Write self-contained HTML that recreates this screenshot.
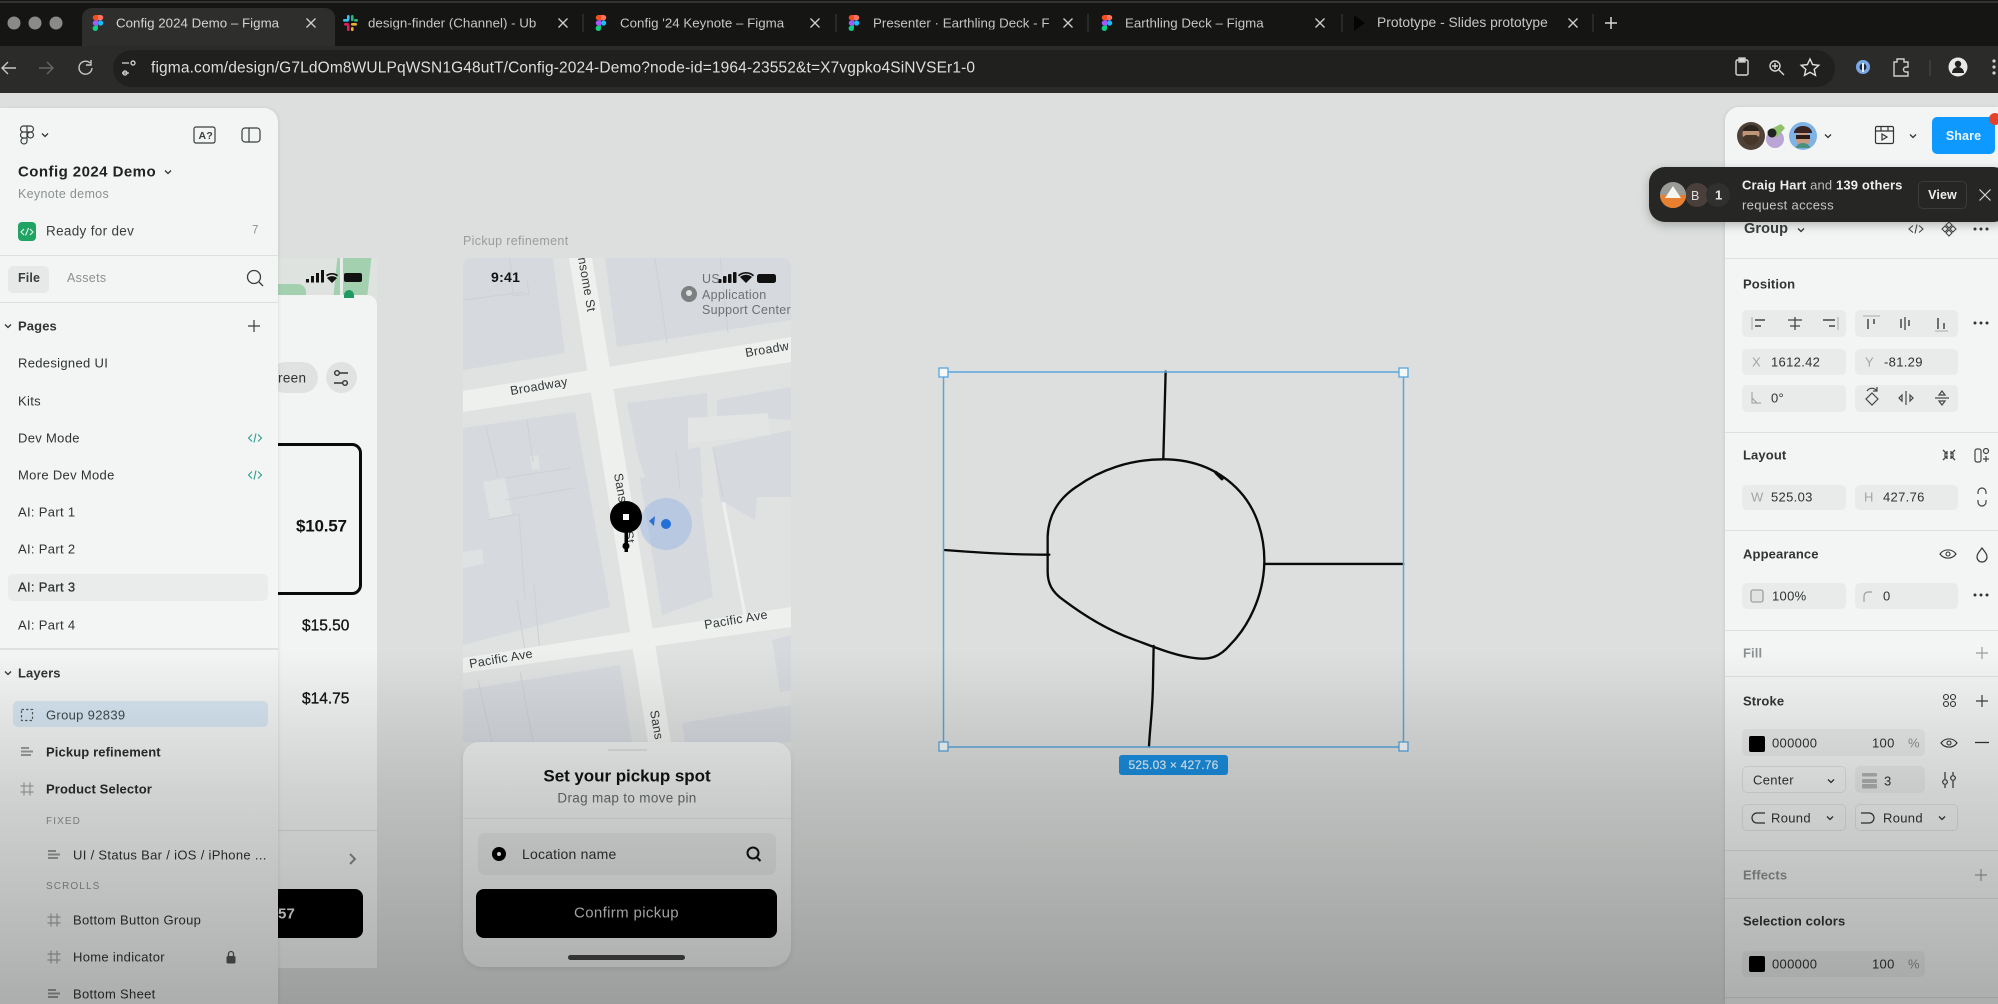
<!DOCTYPE html>
<html lang="en"><head><meta charset="utf-8"><title>Config 2024 Demo – Figma</title>
<style>
html,body{margin:0;padding:0;width:1998px;height:1004px;overflow:hidden;background:#dcdfdd}
#root{position:relative;width:1998px;height:1004px;overflow:hidden;background:#dcdfdd;filter:blur(.35px);font:13px "Liberation Sans",sans-serif;color:#2f3232;letter-spacing:.32px}
.a{position:absolute}
.t{position:absolute;white-space:nowrap;line-height:1;transform:translateY(-50%)}
.b{font-weight:700;letter-spacing:.12px}.g{color:#8d9090}
.tab{color:#c6c6c4;font-size:13.3px;letter-spacing:.02px}
.f{position:absolute;background:#e8ebea;border-radius:5px}
.s{position:absolute;border:1px solid #dfe2e1;border-radius:5px;box-sizing:border-box}
.d{position:absolute;height:1px;background:#dde0df}
.c{left:0;right:0;text-align:center}
svg{position:absolute;left:0;top:0;overflow:visible}
</style></head><body><div id="root">

<!-- browser chrome -->
<div class="a" style="left:0;top:0;width:1998px;height:92px;background:#151614"></div>
<div class="a" style="left:0;top:1px;width:1998px;height:2px;background:#333431"></div>
<div class="a" style="left:82px;top:8px;width:253px;height:38px;background:#2e2f2c;border-radius:10px 10px 0 0"></div>
<div class="a" style="left:0;top:46px;width:1998px;height:47px;background:#2b2c29"></div>
<div class="a" style="left:113px;top:50px;width:1722px;height:37px;background:#20211f;border-radius:19px"></div>
<div class="t tab" style="left:116px;top:23px;color:#d4d4d2">Config 2024 Demo – Figma</div>
<div class="t tab" style="left:368px;top:23px;width:176px;overflow:hidden">design-finder (Channel) - Ub</div>
<div class="t tab" style="left:620px;top:23px">Config '24 Keynote – Figma</div>
<div class="t tab" style="left:873px;top:23px;width:176px;overflow:hidden">Presenter · Earthling Deck - F</div>
<div class="t tab" style="left:1125px;top:23px">Earthling Deck – Figma</div>
<div class="t tab" style="left:1377px;top:23px;font-size:13.8px">Prototype - Slides prototype</div>
<div class="t" style="left:151px;top:68px;color:#dededc;font-size:15.5px;letter-spacing:.14px">figma.com/design/G7LdOm8WULPqWSN1G48utT/Config-2024-Demo?node-id=1964-23552&amp;t=X7vgpko4SiNVSEr1-0</div>

<!-- product selector frame behind left panel -->
<div class="a" style="left:270px;top:258px;width:107px;height:45px;background:#dfe3e0;overflow:hidden">
<div class="a" style="left:8px;top:26px;width:28px;height:20px;background:#a3d1b0;border-radius:0 8px 0 0"></div>
<div class="a" style="left:65px;top:0;width:34px;height:45px;background:#a3d1b0;transform:skewX(-6deg)"></div>
<div class="a" style="left:70px;top:0;width:3px;height:45px;background:#e8ecea"></div>
</div>
<div class="a" style="left:270px;top:295px;width:107px;height:673px;background:#f1f4f3;border-radius:0 10px 0 0"></div>
<div class="a" style="left:270px;top:362px;width:48px;height:31px;background:#dfe2e1;border-radius:16px"></div>
<div class="t" style="left:278px;top:378px;font-size:13.5px">reen</div>
<div class="a" style="left:326px;top:362px;width:31px;height:31px;background:#dfe2e1;border-radius:50%"></div>
<div class="a" style="left:262px;top:443px;width:100px;height:152px;box-sizing:border-box;border:3px solid #0a0a0a;border-radius:10px"></div>
<div class="t b" style="left:296px;top:526px;font-size:17px;color:#111;letter-spacing:-.2px">$10.57</div>
<div class="t" style="left:302px;top:626px;font-size:15.5px;color:#111;-webkit-text-stroke:.3px #111;letter-spacing:0">$15.50</div>
<div class="t" style="left:302px;top:699px;font-size:15.5px;color:#111;-webkit-text-stroke:.3px #111;letter-spacing:0">$14.75</div>
<div class="a" style="left:270px;top:830px;width:107px;height:1px;background:#dcdfde"></div>
<div class="a" style="left:262px;top:889px;width:101px;height:49px;background:#000;border-radius:8px"></div>
<div class="t b" style="left:278px;top:914px;color:#e6e6e6;font-size:15px">57</div>

<!-- phone: pickup refinement -->
<div class="t" style="left:463px;top:241px;color:#9a9d9c;font-size:12.5px">Pickup refinement</div>
<svg width="1998" height="1004" font-family="Liberation Sans, sans-serif" style="letter-spacing:.3px">
<clipPath id="ph"><path d="M463 266a8 8 0 0 1 8-8h312a8 8 0 0 1 8 8v490H463z"/></clipPath>
<g clip-path="url(#ph)">
<rect x="463" y="258" width="328" height="500" fill="#dfe2e1"/>
<g fill="#d6dadf">
<path d="M463 258h90l12 95-102 17z"/>
<path d="M605 258h186v62l-174 27z"/>
<path d="M463 428l112-16 35 195-147 38z"/>
<path d="M627 403l80-10 1 34-20 3v20l-50 7z"/>
<path d="M717 400l74-13v33l-31-2-2 9-41 6z"/>
<path d="M638 457l62-10 3 50-47 10z"/>
<path d="M713 447l78-17v67h-34l-2 23-35-20z"/>
<path d="M640 478l57-8 16 127-51 18z"/>
<path d="M463 690l157-25 12 77H463z"/>
<path d="M682 723l109-18v37H685z"/>
<path d="M772 640l19-5v55l-11 2z"/>
</g>
<path d="M483 482l22-4 7 37-22 3zM463 552l19-3 2 15-21 4zM530 456l8-1 2 14-8 1z" fill="#dfe2e2"/>
<g fill="none" stroke="#cdd1d5" stroke-width="1">
<path d="M510 258l3 38 16-2-2-14M463 300l62-8M486 427l12 50M527 420l6 42M505 478l65-10M505 500l70-12M487 520l32-6 6 85M478 680l14 62M520 672l13 70M540 655l-6-70M517 600l8 50"/>
<path d="M655 258l12 85M720 258l8 75M676 450l4 40M713 447l10 50M650 630l5 0"/>
</g>
<path d="M688 418l80-5 2 22-82 8z" fill="#e2e5e4"/>
<path d="M722 503l3-1 22 115-3 1z" fill="#eef0ef"/>
<g fill="#eef0ee">
<path d="M569 258h23l79 484h-23z"/>
<path d="M463 391l328-54v25l-328 50z"/>
<path d="M463 658l328-51v20L463 673z"/>
</g>
<g fill="#33383a" font-size="12.5">
<text x="0" y="0" transform="translate(511 395) rotate(-9.5)">Broadway</text>
<text x="0" y="0" transform="translate(746 357) rotate(-9.5)">Broadw</text>
<text x="0" y="0" transform="translate(578 258) rotate(80)">nsome St</text>
<text x="0" y="0" transform="translate(614 474) rotate(80)">Sansome St</text>
<text x="0" y="0" transform="translate(705 629) rotate(-9.5)">Pacific Ave</text>
<text x="0" y="0" transform="translate(470 668) rotate(-9.5)">Pacific Ave</text>
<text x="0" y="0" transform="translate(650 711) rotate(80)">Sans</text>
</g>
<circle cx="666" cy="524" r="26" fill="#6d9be6" fill-opacity=".28"/>
<circle cx="666" cy="524" r="5" fill="#2470d8"/>
<path d="M655 516l-6 5 5 5z" fill="#2f6fd0"/>
<rect x="624.5" y="525" width="3.5" height="27" fill="#000"/><circle cx="626" cy="546" r="3.5" fill="#000"/>
<circle cx="626" cy="517" r="16" fill="#000"/><rect x="623" y="514" width="6" height="6" fill="#fff"/>
<text x="491" y="282" font-size="14" font-weight="700" fill="#111">9:41</text>
<g fill="#111"><rect x="718" y="279" width="3.5" height="4" rx="1"/><rect x="723" y="276" width="3.5" height="7" rx="1"/><rect x="728" y="274" width="3.5" height="9" rx="1"/><rect x="733" y="272" width="3.5" height="11" rx="1"/><rect x="757" y="274" width="19" height="9" rx="2.5"/><path d="M746 283l-6-6a9 9 0 0 1 12 0zM738 275a12 12 0 0 1 16 0l-1 1.5a10 10 0 0 0-14 0z"/></g>
<g fill="#6c7071" font-size="12.5"><text x="702" y="283">US</text><text x="702" y="299">Application</text><text x="702" y="314">Support Center</text></g>
<circle cx="689" cy="294" r="8" fill="#7c8081"/><circle cx="689" cy="293" r="3" fill="#dfe2e1"/>
</g>
</svg>
<div class="a" style="left:463px;top:742px;width:328px;height:225px;background:#eef1f0;border-radius:16px 16px 20px 20px;box-shadow:0 2px 6px rgba(0,0,0,.08)"></div>
<div class="a" style="left:608px;top:749px;width:39px;height:2px;background:#dcdfde"></div>
<div class="t b c" style="left:463px;right:auto;width:328px;top:776px;font-size:17px;color:#111;letter-spacing:-.05px">Set your pickup spot</div>
<div class="t c" style="left:463px;right:auto;width:328px;top:798px;font-size:13.5px;color:#666a6a">Drag map to move pin</div>
<div class="a" style="left:463px;top:818px;width:328px;height:1px;background:#e0e3e2"></div>
<div class="a" style="left:478px;top:833px;width:298px;height:42px;background:#e3e6e5;border-radius:7px"></div>
<div class="a" style="left:492px;top:847px;width:14px;height:14px;background:#000;border-radius:50%"></div>
<div class="a" style="left:497px;top:852px;width:4px;height:4px;background:#fff;border-radius:50%"></div>
<div class="t" style="left:522px;top:854px;font-size:14px;letter-spacing:.2px">Location name</div>
<div class="a" style="left:476px;top:889px;width:301px;height:49px;background:#000;border-radius:8px"></div>
<div class="t c" style="left:476px;right:auto;width:301px;top:913px;font-size:15px;color:#cfcfcf;letter-spacing:.35px">Confirm pickup</div>
<div class="a" style="left:568px;top:955px;width:117px;height:5px;background:#444;border-radius:3px"></div>

<!-- vector drawing + selection -->
<svg width="1998" height="1004">
<g transform="translate(920 350) scale(.3333)" fill="none" stroke="#0a0a0a" stroke-width="7" stroke-linecap="round">
<path d="M730 328C830 328 905 365 960 425C1010 480 1035 560 1033 640C1030 740 985 830 930 885C900 920 870 930 830 925C770 920 700 890 640 868C560 840 490 795 430 750C395 725 383 700 383 665L383 560C385 500 410 450 470 410C540 360 630 328 730 328Z"/>
<path d="M737 65L730 328M72 600C150 606 280 615 388 614M1033 642L1450 642M701 888L699 1000C698 1080 690 1130 687 1190"/>
<path d="M888 368l18 18" stroke-width="10"/>
</g>
<rect x="943.5" y="372" width="460" height="375" fill="none" stroke="#5aa6dc" stroke-width="1.5"/>
<g fill="#f3f8fa" stroke="#5aa6dc" stroke-width="1.3"><rect x="939" y="368" width="9" height="9"/><rect x="1399" y="368" width="9" height="9"/><rect x="939" y="742" width="9" height="9"/><rect x="1399" y="742" width="9" height="9"/></g>
</svg>
<div class="a" style="left:1119px;top:755px;width:109px;height:20px;background:#1a8fe0;border-radius:3px"></div>
<div class="t c" style="left:1119px;right:auto;width:109px;top:765px;color:#d7eefc;font-size:12px;letter-spacing:.2px;-webkit-text-stroke:.25px #d7eefc">525.03 × 427.76</div>

<!-- left panel -->
<div class="a" style="left:0;top:108px;width:278px;height:896px;background:#f2f5f4;border-radius:0 14px 0 0;box-shadow:1px 0 3px rgba(0,0,0,.08)"></div>
<div class="t b" style="left:18px;top:172px;font-size:15px;color:#222;letter-spacing:.45px">Config 2024 Demo</div>
<div class="t g" style="left:18px;top:194px;font-size:12.5px">Keynote demos</div>
<div class="a" style="left:18px;top:222px;width:18px;height:19px;background:#1fa463;border-radius:4px"></div>
<div class="t" style="left:46px;top:231px;font-size:13.5px;color:#3a3d3d">Ready for dev</div>
<div class="t g" style="left:252px;top:231px;font-size:11.5px">7</div>
<div class="d" style="left:0;top:255px;width:278px"></div>
<div class="a" style="left:8px;top:266px;width:41px;height:27px;background:#e6e9e8;border-radius:5px"></div>
<div class="t b" style="left:18px;top:278px;font-size:12.5px;color:#3a3d3d">File</div>
<div class="t g" style="left:67px;top:278px;font-size:12.5px">Assets</div>
<div class="d" style="left:0;top:302px;width:278px"></div>
<div class="t b" style="left:18px;top:326px;color:#333">Pages</div>
<div class="t" style="left:18px;top:363px">Redesigned UI</div>
<div class="t" style="left:18px;top:401px">Kits</div>
<div class="t" style="left:18px;top:438px">Dev Mode</div>
<div class="t" style="left:18px;top:475px">More Dev Mode</div>
<div class="t" style="left:18px;top:512px">AI: Part 1</div>
<div class="t" style="left:18px;top:549px">AI: Part 2</div>
<div class="a" style="left:8px;top:574px;width:260px;height:27px;background:#e9eceb;border-radius:5px"></div>
<div class="t" style="left:18px;top:587px;-webkit-text-stroke:.25px #2f3232">AI: Part 3</div>
<div class="t" style="left:18px;top:625px">AI: Part 4</div>
<div class="a" style="left:0;top:648px;width:278px;height:2px;background:#dde0df"></div>
<div class="t b" style="left:18px;top:673px;color:#333">Layers</div>
<div class="a" style="left:13px;top:701px;width:255px;height:26px;background:#d6e6f1;border-radius:5px"></div>
<div class="t" style="left:46px;top:715px;color:#3f4a4d">Group 92839</div>
<div class="t b" style="left:46px;top:752px;color:#2a2c2c">Pickup refinement</div>
<div class="t b" style="left:46px;top:789px;color:#2a2c2c">Product Selector</div>
<div class="t g" style="left:46px;top:822px;font-size:10px;letter-spacing:1.1px">FIXED</div>
<div class="t" style="left:73px;top:855px">UI / Status Bar / iOS / iPhone ...</div>
<div class="t g" style="left:46px;top:887px;font-size:10px;letter-spacing:1.1px">SCROLLS</div>
<div class="t" style="left:73px;top:920px">Bottom Button Group</div>
<div class="t" style="left:73px;top:957px">Home indicator</div>
<div class="t" style="left:73px;top:994px">Bottom Sheet</div>

<!-- right panel -->
<div class="a" style="left:1725px;top:107px;width:273px;height:897px;background:#f2f5f4;border-radius:14px 0 0 0;box-shadow:-1px 0 3px rgba(0,0,0,.08)"></div>
<div class="a" style="left:1932px;top:117px;width:63px;height:37px;background:#0d99ff;border-radius:5px"></div>
<div class="t b c" style="left:1932px;right:auto;width:63px;top:136px;color:#eaf6ff;font-size:12.5px">Share</div>
<div class="a" style="left:1989px;top:113px;width:12px;height:12px;background:#e4432b;border-radius:50%"></div>
<div class="d" style="left:1725px;top:258px;width:273px"></div>
<div class="t b" style="left:1744px;top:229px;font-size:14.5px;color:#3a3d3d">Group</div>
<div class="t b" style="left:1743px;top:284px;color:#333">Position</div>
<div class="f" style="left:1742px;top:310px;width:104px;height:27px"></div>
<div class="f" style="left:1855px;top:310px;width:103px;height:27px"></div>
<div class="f" style="left:1742px;top:349px;width:104px;height:26px"></div>
<div class="f" style="left:1855px;top:349px;width:103px;height:26px"></div>
<div class="f" style="left:1742px;top:385px;width:104px;height:27px"></div>
<div class="f" style="left:1855px;top:385px;width:103px;height:27px"></div>
<div class="t g" style="left:1752px;top:362px;color:#a2a5a5">X</div>
<div class="t" style="left:1771px;top:362px">1612.42</div>
<div class="t g" style="left:1865px;top:362px;color:#a2a5a5">Y</div>
<div class="t" style="left:1884px;top:362px">-81.29</div>
<div class="t" style="left:1771px;top:398px">0°</div>
<div class="d" style="left:1725px;top:432px;width:273px"></div>
<div class="t b" style="left:1743px;top:455px;color:#333">Layout</div>
<div class="f" style="left:1742px;top:485px;width:104px;height:25px"></div>
<div class="f" style="left:1855px;top:485px;width:103px;height:25px"></div>
<div class="t g" style="left:1751px;top:497px;color:#a2a5a5">W</div>
<div class="t" style="left:1771px;top:497px">525.03</div>
<div class="t g" style="left:1864px;top:497px;color:#a2a5a5">H</div>
<div class="t" style="left:1883px;top:497px">427.76</div>
<div class="d" style="left:1725px;top:530px;width:273px"></div>
<div class="t b" style="left:1743px;top:554px;color:#333">Appearance</div>
<div class="f" style="left:1742px;top:583px;width:104px;height:26px"></div>
<div class="f" style="left:1855px;top:583px;width:103px;height:26px"></div>
<div class="t" style="left:1772px;top:596px">100%</div>
<div class="t" style="left:1883px;top:596px">0</div>
<div class="d" style="left:1725px;top:630px;width:273px"></div>
<div class="t b g" style="left:1743px;top:653px">Fill</div>
<div class="d" style="left:1725px;top:676px;width:273px"></div>
<div class="t b" style="left:1743px;top:701px;color:#333">Stroke</div>
<div class="f" style="left:1742px;top:729px;width:183px;height:27px"></div>
<div class="a" style="left:1749px;top:736px;width:16px;height:16px;background:#000;border-radius:2px"></div>
<div class="t" style="left:1772px;top:743px">000000</div>
<div class="t" style="left:1872px;top:743px">100</div>
<div class="t g" style="left:1908px;top:743px">%</div>
<div class="s" style="left:1742px;top:766px;width:104px;height:27px"></div>
<div class="t" style="left:1753px;top:780px">Center</div>
<div class="f" style="left:1855px;top:766px;width:70px;height:27px"></div>
<div class="t" style="left:1884px;top:781px">3</div>
<div class="s" style="left:1742px;top:804px;width:104px;height:27px"></div>
<div class="s" style="left:1855px;top:804px;width:103px;height:27px"></div>
<div class="t" style="left:1771px;top:818px">Round</div>
<div class="t" style="left:1883px;top:818px">Round</div>
<div class="d" style="left:1725px;top:850px;width:273px"></div>
<div class="t b g" style="left:1743px;top:875px">Effects</div>
<div class="d" style="left:1725px;top:898px;width:273px"></div>
<div class="t b" style="left:1743px;top:921px;color:#333">Selection colors</div>
<div class="f" style="left:1742px;top:951px;width:183px;height:26px"></div>
<div class="a" style="left:1749px;top:956px;width:16px;height:16px;background:#000;border-radius:2px"></div>
<div class="t" style="left:1772px;top:964px">000000</div>
<div class="t" style="left:1872px;top:964px">100</div>
<div class="t g" style="left:1908px;top:964px">%</div>
<div class="d" style="left:1725px;top:997px;width:273px"></div>

<!-- toast -->
<div class="a" style="left:1649px;top:167px;width:360px;height:55px;background:#262724;border-radius:16px;box-shadow:0 3px 10px rgba(0,0,0,.25)"></div>
<div class="a" style="left:1685px;top:183px;width:24px;height:24px;background:#4a3f3a;border-radius:50%"></div>
<div class="a" style="left:1706px;top:183px;width:24px;height:24px;background:#30312e;border-radius:50%"></div>
<div class="t" style="left:1691px;top:196px;color:#ddd;font-size:12.5px;letter-spacing:0">B</div>
<div class="t b" style="left:1715px;top:195px;color:#e8e8e6;font-size:13px">1</div>
<div class="t" style="left:1742px;top:185px;color:#bdbdbb;letter-spacing:.15px"><b style="color:#eee">Craig Hart</b> and <b style="color:#eee">139 others</b></div>
<div class="t" style="left:1742px;top:205px;color:#c6c6c4">request access</div>
<div class="a" style="left:1918px;top:181px;width:49px;height:28px;box-sizing:border-box;border:1px solid #3a3b38;border-radius:5px"></div>
<div class="t b c" style="left:1918px;right:auto;width:49px;top:195px;color:#eee;font-size:12.5px">View</div>

<!-- icons -->
<svg width="1998" height="1004">
<defs>
<g id="fg"><path d="M0-8h-2.6a2.6 2.6 0 0 0 0 5.3H0z" fill="#f24e1e"/><path d="M0-8h2.6a2.6 2.6 0 0 1 0 5.3H0z" fill="#ff7262"/><path d="M0-2.7h-2.6a2.6 2.6 0 0 0 0 5.3H0z" fill="#a259ff"/><circle cx="2.6" r="2.6" fill="#1abcfe"/><path d="M0 2.6h-2.6a2.7 2.7 0 1 0 2.6 2.7z" fill="#0acf83"/></g>
<path id="x" d="M-4.5-4.5l9 9M4.5-4.5l-9 9" fill="none" stroke="#d0d0ce" stroke-width="1.3"/>
<path id="ch" d="M-3-1.5L0 1.5 3-1.5" fill="none" stroke="#333" stroke-width="1.3"/>
<path id="pl" d="M-6 0H6M0-6V6" fill="none" stroke="#3a3d3d" stroke-width="1.2"/>
<path id="plg" d="M-6 0H6M0-6V6" fill="none" stroke="#9a9d9d" stroke-width="1.2"/>
<g id="dt" fill="#333"><circle cx="-6" r="1.5"/><circle r="1.5"/><circle cx="6" r="1.5"/></g>
<g id="ey" fill="none" stroke="#333" stroke-width="1.1"><path d="M-8 0C-4-5.5 4-5.5 8 0C4 5.5-4 5.5-8 0Z"/><circle r="2"/></g>
<g id="lay" fill="#9a9d9d"><rect x="-6" y="-5" width="8" height="2"/><rect x="-6" y="-1.5" width="12" height="2"/><rect x="-6" y="2" width="10" height="2"/></g>
<path id="fr" d="M-3-6.5V6.5M3-6.5V6.5M-6.5-3H6.5M-6.5 3H6.5" fill="none" stroke="#a4a7a7" stroke-width="1.2"/>
<g id="cd" fill="none" stroke="#2e9d8b" stroke-width="1.1"><path d="M-3-3.5L-6.5 0-3 3.5M3-3.5L6.5 0 3 3.5M1-4.5L-1 4.5"/></g>
</defs>

<!-- chrome -->
<g fill="#8a8a88"><circle cx="14" cy="23" r="6.5"/><circle cx="35" cy="23" r="6.5"/><circle cx="56" cy="23" r="6.5"/></g>
<use href="#fg" x="98" y="23"/><use href="#fg" x="601" y="23"/><use href="#fg" x="854" y="23"/><use href="#fg" x="1107" y="23"/>
<use href="#x" x="311" y="23"/><use href="#x" x="563" y="23"/><use href="#x" x="815" y="23"/><use href="#x" x="1068" y="23"/><use href="#x" x="1320" y="23"/><use href="#x" x="1573" y="23"/>
<path d="M583 14v18M836 14v18M1088 14v18M1342 14v18M1593 14v18" stroke="#3c3d3a"/>
<g><rect x="343" y="19" width="6" height="2.6" rx="1.3" fill="#36c5f0"/><rect x="351" y="15" width="2.6" height="6" rx="1.3" fill="#2eb67d"/><rect x="351" y="23" width="6" height="2.6" rx="1.3" fill="#ecb22e"/><rect x="347" y="25" width="2.6" height="6" rx="1.3" fill="#e01e5a"/><rect x="347" y="15" width="2.6" height="5" rx="1.3" fill="#36c5f0"/><rect x="344" y="23" width="5" height="2.6" rx="1.3" fill="#e01e5a"/><rect x="351" y="27" width="2.6" height="4" rx="1.3" fill="#ecb22e"/><rect x="354" y="19" width="4" height="2.6" rx="1.3" fill="#2eb67d"/></g>
<path d="M1354 15l11 8-11 8z" fill="#050505"/>
<path d="M1605 23h12M1611 17v12" stroke="#d8d8d6" stroke-width="1.5"/>
<g fill="none" stroke="#c8c8c6" stroke-width="1.4">
<path d="M16 68H2M8 62l-6 6 6 6"/>
<path d="M39 68h14M47 62l6 6-6 6" stroke="#666"/>
<path d="M90 63a6.5 6.5 0 1 0 2 5M91 60v5h-5"/>
<path d="M122 63h7M122 73h7" stroke="#bbb"/><circle cx="133" cy="63" r="2"/><circle cx="125" cy="73" r="2"/>
<rect x="1736" y="60" width="12" height="15" rx="1.5" stroke="#d8d8d6"/><rect x="1739" y="58" width="6" height="4" fill="#d8d8d6"/>
<circle cx="1775" cy="66" r="5" stroke="#d8d8d6"/><path d="M1779 70l5 5M1775 63v6M1772 66h6" stroke="#d8d8d6"/>
<path d="M1810 59l2.6 5.6 6.2.7-4.6 4.1 1.3 6-5.500-3.100-5.500 3.100 1.300-6-4.600-4.100 6.200-.7z" stroke="#e0e0de"/>
<path d="M1894 62h3v-3h7v3h4v5h-2a2 2 0 0 0 0 5h2v4h-14z" stroke="#cfcfcd"/>
<path d="M1930 60v16" stroke="#444"/>
</g>
<circle cx="1863" cy="67" r="7" fill="#7aa7e6"/><circle cx="1863" cy="67" r="3.5" fill="#1d2a3d"/><rect x="1862" y="63" width="2" height="9" fill="#e8eef6"/>
<circle cx="1958" cy="67" r="9.5" fill="#e8e8e6"/><circle cx="1958" cy="64" r="3.2" fill="#20211f"/><path d="M1952 73a6 6 0 0 1 12 0z" fill="#20211f"/>
<g fill="#cfcfcd"><circle cx="1994" cy="61" r="1.6"/><circle cx="1994" cy="67" r="1.6"/><circle cx="1994" cy="73" r="1.6"/></g>

<!-- product frame bits -->
<g fill="#111"><rect x="306" y="279" width="3" height="3.5"/><rect x="311" y="276" width="3" height="6.5"/><rect x="316" y="273" width="3" height="9.5"/><rect x="321" y="270" width="3" height="12.5"/><rect x="344" y="273" width="18" height="9" rx="2"/><path d="M332 283l-5-5a7.5 7.5 0 0 1 10 0zM326 275a10 10 0 0 1 12 0l-1 1.400a8 8 0 0 0-10 0z"/></g>
<path d="M349 290a5 5 0 0 1 5 5v3h-10v-3a5 5 0 0 1 5-5z" fill="#1f9a63"/>
<g fill="none" stroke="#333" stroke-width="1.4"><path d="M334 373h14M334 383h14"/><circle cx="337" cy="373" r="2.3" fill="#dfe2e1"/><circle cx="345" cy="383" r="2.3" fill="#dfe2e1"/></g>
<path d="M350 854l5 5-5 5" fill="none" stroke="#888" stroke-width="2"/>
<g fill="none" stroke="#111" stroke-width="2"><circle cx="753" cy="853" r="5.5"/><path d="M757 857.5l3.5 3.5"/></g>

<!-- left panel icons -->
<g fill="none" stroke="#3a3d3d" stroke-width="1.2">
<path d="M27 126h-3.500a3 3 0 0 0 0 6H27zM27 126h3.500a3 3 0 0 1 0 6H27zM27 132h-3.500a3 3 0 0 0 0 6H27zM27 138h-3.500a3 3 0 1 0 3.500 3z"/><circle cx="30.500" cy="135" r="3"/>
<rect x="194" y="127" width="21" height="16" rx="2"/>
<rect x="242" y="128" width="18" height="14" rx="3"/><path d="M249 128v14"/>
<circle cx="254" cy="277" r="6.500" stroke-width="1.300"/><path d="M259 282l4 4" stroke-width="1.300"/>
</g>
<text x="198.500" y="139" font-family="Liberation Sans,sans-serif" font-size="10.500" font-weight="700" fill="#3a3d3d">A?</text>
<use href="#ch" x="45" y="135"/><use href="#ch" x="168" y="172"/><use href="#ch" x="8" y="326"/><use href="#ch" x="8" y="673"/>
<g fill="none" stroke="#e8f7ee" stroke-width="1.100"><path d="M24 229l-3 3 3 3M30 229l3 3-3 3M28.500 228l-3 7.500"/></g>
<use href="#pl" x="254" y="326"/>
<use href="#cd" x="255" y="438"/><use href="#cd" x="255" y="475"/>
<rect x="21.500" y="709.500" width="11" height="11" fill="none" stroke="#565b5e" stroke-width="1.200" stroke-dasharray="2.500 2"/>
<use href="#lay" x="27" y="752"/><use href="#fr" x="27" y="789"/><use href="#lay" x="54" y="855"/><use href="#fr" x="54" y="920"/><use href="#fr" x="54" y="957"/><use href="#lay" x="54" y="994"/>
<rect x="226.500" y="956" width="9" height="7.500" rx="1.500" fill="#555"/><path d="M228.500 956v-2a2.500 2.500 0 0 1 5 0v2" fill="none" stroke="#555" stroke-width="1.300"/>

<!-- right panel top -->
<circle cx="1751" cy="136" r="14" fill="#4e4138"/><circle cx="1751" cy="134" r="8.500" fill="#c09478"/><path d="M1743 137a8 8 0 0 0 16 0l-3-2h-10z" fill="#463629"/><path d="M1743 131a8 6 0 0 1 16 0z" fill="#2c241e"/>
<circle cx="1775" cy="139" r="9" fill="#b9a6d6"/><path d="M1767 131l14-7 4 4-8 9z" fill="#8fc06a"/><circle cx="1772" cy="133" r="4.500" fill="#1f2320"/>
<circle cx="1803" cy="136" r="14" fill="#7fb3e6"/><circle cx="1803" cy="139" r="7" fill="#c89a80"/><path d="M1794 133a9 7 0 0 1 18 0z" fill="#3a2320"/><rect x="1796" y="135" width="14" height="4" fill="#2a1a18"/><path d="M1796 148a7 5 0 0 1 14 0z" fill="#4d8f7f"/>
<use href="#ch" x="1828" y="136"/>
<g fill="none" stroke="#333" stroke-width="1.200"><rect x="1875.500" y="126.500" width="18" height="17" rx="1.500"/><path d="M1875.500 131h18M1881 126v5M1888 126v5"/><path d="M1882 134l5 3-5 3z"/></g>
<use href="#ch" x="1913" y="136"/>
<circle cx="1673" cy="195" r="13" fill="#9a9a97"/><path d="M1660 195a13 13 0 0 0 26 0z" fill="#e8802f"/><path d="M1673 186l8 12h-16z" fill="#f5f5f2"/>
<path d="M1979.500 189.500l11 11M1990.500 189.500l-11 11" stroke="#d8d8d6" stroke-width="1.200" fill="none"/>
<use href="#ch" x="1801" y="230"/>
<path d="M1913 225.500l-4 3.500 4 3.500M1919 225.500l4 3.500-4 3.500M1917 224.500l-2 9" fill="none" stroke="#444" stroke-width="1.100"/>
<g fill="none" stroke="#444" stroke-width="1.100"><path d="M1949 222l3 3-3 3-3-3zM1949 230l3 3-3 3-3-3zM1945 226l3 3-3 3-3-3zM1953 226l3 3-3 3-3-3z"/></g>
<use href="#dt" x="1981" y="229"/>

<!-- align icons -->
<g fill="none" stroke="#444" stroke-width="1.500">
<path d="M1752 317v13" stroke="#aaa" stroke-width="1"/><path d="M1755 320h10M1755 326h6"/>
<path d="M1788 320h14M1790 326h10M1795 317v13" stroke-width="1.300"/>
<path d="M1838 317v13" stroke="#aaa" stroke-width="1"/><path d="M1823 320h12M1829 326h6"/>
<path d="M1863 316h17" stroke="#aaa" stroke-width="1"/><path d="M1868 319v10M1874 319v5"/>
<path d="M1905 317v13" stroke-width="1.300"/><path d="M1901 319v9M1909 320v6"/>
<path d="M1935 331h13" stroke="#aaa" stroke-width="1"/><path d="M1938 318v11M1944 323v6"/>
</g>
<use href="#dt" x="1981" y="323"/>
<path d="M1752 392v11h9M1752 398l5 5" fill="none" stroke="#9a9d9d" stroke-width="1"/>
<g fill="none" stroke="#444" stroke-width="1.200"><path d="M1872 393l6 6-6 6-6-6z"/><path d="M1867 391a6 6 0 0 1 10 0M1877 387v4h-4"/>
<path d="M1906 391v14"/><path d="M1902 395l-3 3 3 3zM1910 395l3 3-3 3z"/><path d="M1935 398h14"/><path d="M1939 395l3-4 3 4zM1939 401l3 4 3-4z"/></g>
<g fill="none" stroke="#444" stroke-width="1.300"><path d="M1943 450l4 4M1947 451v3h-3M1955 450l-4 4M1951 451v3h3M1943 460l4-4M1947 459v-3h-3M1955 460l-4-4M1951 459v-3h3"/></g>
<g fill="none" stroke="#444" stroke-width="1.200">
<rect x="1975" y="449" width="6" height="13" rx="2"/><circle cx="1986" cy="451" r="2.500"/><path d="M1986 456v6M1983 459h6"/>
<path d="M1978 494v-2a4 4 0 0 1 8 0v2M1978 500v2a4 4 0 0 0 8 0v-2"/></g>
<use href="#ey" x="1948" y="554"/>
<path d="M1982 548c3 4 5 6 5 9a5 5 0 0 1-10 0c0-3 2-5 5-9z" fill="none" stroke="#333" stroke-width="1.200"/>
<rect x="1751" y="590" width="12" height="12" rx="2" fill="#e0e3e2" stroke="#8f9292" stroke-width="1.100"/>
<path d="M1864 602v-6a4 4 0 0 1 4-4h4" fill="none" stroke="#9a9d9d" stroke-width="1.200"/>
<use href="#dt" x="1981" y="595"/>
<use href="#plg" x="1982" y="653"/>
<g fill="none" stroke="#333" stroke-width="1.100"><circle cx="1946" cy="697" r="2.500"/><circle cx="1953" cy="697" r="2.500"/><circle cx="1946" cy="704" r="2.500"/><circle cx="1953" cy="704" r="2.500"/></g>
<use href="#pl" x="1982" y="701"/>
<use href="#ey" x="1949" y="743"/>
<path d="M1975 742.500h14" stroke="#333" stroke-width="1.300"/>
<use href="#ch" x="1831" y="781"/>
<g fill="#b0b3b3"><rect x="1862" y="773" width="15" height="3.500" rx="1"/><rect x="1862" y="779" width="15" height="4" rx="1"/><rect x="1862" y="784" width="15" height="4.500" rx="1"/></g>
<g fill="none" stroke="#333" stroke-width="1.200"><path d="M1945 772v7M1945 785v3M1953 772v3M1953 781v7"/><circle cx="1945" cy="782" r="2.300"/><circle cx="1953" cy="778" r="2.300"/></g>
<g fill="none" stroke="#333" stroke-width="1.200"><path d="M1765 813h-8a5 5 0 0 0 0 10h8"/><path d="M1861 813h8a5 5 0 0 1 0 10h-8"/></g>
<use href="#ch" x="1830" y="818"/><use href="#ch" x="1942" y="818"/>
<use href="#plg" x="1981" y="875"/>
</svg>

<!-- video vignette -->
<div class="a" style="left:0;top:0;width:1998px;height:1004px;pointer-events:none;background:linear-gradient(to bottom,rgba(0,0,0,0) 0,rgba(0,0,0,0) 650px,rgba(0,0,0,.08) 727px,rgba(0,0,0,.14) 793px,rgba(0,0,0,.21) 893px,rgba(0,0,0,.29) 1004px)"></div>
</div></body></html>
